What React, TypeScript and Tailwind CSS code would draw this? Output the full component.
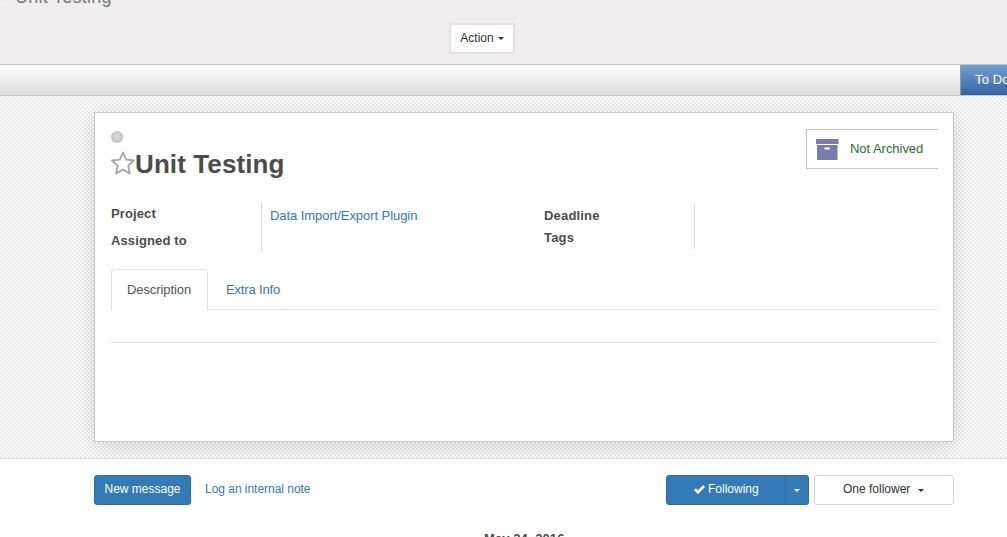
import React from "react";

function Caret({ className = "" }: { className?: string }) {
  return (
    <svg className={className} width="6" height="3" viewBox="0 0 6 3" fill="currentColor" aria-hidden="true">
      <path d="M0 0h6L3 3z" />
    </svg>
  );
}

function StarIcon() {
  return (
    <svg width="24" height="24" viewBox="0 0 24 24" fill="none" stroke="#a8a8a8" strokeWidth="1.9" strokeLinejoin="round" aria-hidden="true">
      <path d="M12 1.6l3.2 7 7.7.9-5.6 5.2 1.5 7.7-6.8-3.8-6.8 3.8 1.5-7.7L1.1 9.5l7.7-.9z" />
    </svg>
  );
}

function ArchiveIcon() {
  return (
    <svg width="23" height="21" viewBox="0 0 23 21" fill="#7c7bad" aria-hidden="true">
      <path d="M0.5 0h21.5q.5 0 .5.5v4.5H0V.5q0-.5.5-.5z" />
      <path fillRule="evenodd" d="M1 6h20.5v14.3q0 .7-.7.7H1.7q-.7 0-.7-.7zM9.2 8.6a.9.9 0 0 0 0 2h3.8a.9.9 0 0 0 0-2z" />
    </svg>
  );
}

function CheckIcon() {
  return (
    <svg width="11" height="9" viewBox="0 0 11 9" fill="none" stroke="currentColor" strokeWidth="2.7" aria-hidden="true">
      <path d="M.9 4.2l3.1 3L10.1 1" />
    </svg>
  );
}

export default function App() {
  return (
    <div className="flex h-[537px] w-[1007px] flex-col overflow-hidden bg-white font-['Liberation_Sans',Arial,sans-serif] text-[13px] leading-[18px] text-[#4c4c4c]">
      <header className="flex h-[65px] shrink-0 flex-col border-b border-[#c5c5cd] bg-[#f0eeee]">
        <div className="-mt-[15px] flex h-[24px] items-center gap-[12px] whitespace-nowrap text-[18px] leading-[24px] text-[#777]">
          <span className="-ml-[2px] w-[5px] text-[#aaa]">/</span>
          <span className="tracking-[0.25px]">Unit Testing</span>
        </div>
        <button className="ml-[449px] mt-[14px] flex h-[31px] w-[66px] items-center rounded-[3px] border-2 border-[#e3e2e2] bg-white pb-[2px] pl-[9px] text-[12px] text-[#333]">
          <span className="w-[34px] whitespace-nowrap">Action</span>
          <Caret className="ml-[4px] mt-[2px]" />
        </button>
      </header>

      <div className="flex h-[31px] shrink-0 justify-end border-b border-[#cacaca] bg-gradient-to-b from-[#fcfcfc] to-[#dedede]">
        <div className="h-[30px] w-[47px] overflow-hidden whitespace-nowrap border-l border-[#8b9bb5] bg-gradient-to-b from-[#729fcf] to-[#3465a4] pl-[14px] leading-[30px] tracking-[0.15px] text-white [text-shadow:0_1px_1px_rgba(43,43,43,.5),0_0_3px_rgba(255,255,255,.5)]">
          To Do
        </div>
      </div>

      <main className="flex h-[363px] shrink-0 overflow-hidden border-b border-[#ddd] bg-[conic-gradient(#fff_25%,#ebebeb_0_50%,#fff_0_75%,#ebebeb_0)] bg-[length:4px_4px] pl-[94px] pt-[16px]">
        <section className="h-[330px] w-[860px] border border-[#c8c8d3] bg-white pl-[16px] shadow-[0_4px_20px_rgba(0,0,0,.15)]">
          <div className="flex h-[89px] justify-between pt-[16px]">
            <div>
              <div className="mt-[2px] size-[12px] rounded-full bg-[radial-gradient(circle,#dedede_5%,#c1c1c1_70%)]" />
              <div className="mt-[5px] flex h-[32px] items-center">
                <div className="-mt-[3px]"><StarIcon /></div>
                <h1 className="whitespace-nowrap text-[26px] font-bold leading-[32px] tracking-[0.1px]">Unit Testing</h1>
              </div>
            </div>
            <div className="mr-[15px] flex h-[40px] w-[132px] items-center border border-r-0 border-[#c8c8c8] pl-[9px] text-[#2b6e38]">
              <ArchiveIcon />
              <span className="ml-[11px] whitespace-nowrap tracking-[-0.04px]">Not Archived</span>
            </div>
          </div>

          <div className="flex h-[68px] font-bold">
            <div className="flex h-[50px] w-[151px] flex-col gap-[9px] border-r border-[#ddd] pt-[3px] tracking-[0.12px]">
              <span>Project</span>
              <span>Assigned to</span>
            </div>
            <a className="w-[282px] pl-[8px] pt-[5px] font-normal tracking-[-0.06px] text-[#337ab7]">Data Import/Export Plugin</a>
            <div className="mt-[2px] flex h-[45px] w-[151px] flex-col gap-[4px] border-r border-[#ddd] pt-[3px] tracking-[0.18px]">
              <span>Deadline</span>
              <span>Tags</span>
            </div>
          </div>

          <nav className="flex h-[40px] w-[826px] border-b border-[#e2e2e2]">
            <div className="-mt-px h-[41px] w-[97px] shrink-0 rounded-t-[4px] border border-b-0 border-[#e0e0e0] bg-white pl-[15px] pt-[11px] tracking-[-0.09px] text-[#555]">Description</div>
            <a className="pl-[18px] pt-[11px] tracking-[-0.15px] text-[#337ab7]">Extra Info</a>
          </nav>
          <div className="h-[33px] w-[826px] border-b border-[#e2e2e2]" />
        </section>
      </main>

      <footer className="h-[78px] bg-white text-[12px]">
        <div className="flex h-[61px] pl-[94px] pt-[16px]">
          <button className="h-[30px] w-[97px] whitespace-nowrap rounded-[3px] border border-[#2e6da4] bg-[#337ab7] pb-[2px] text-white">New message</button>
          <a className="ml-[14px] w-[461px] pt-[5px] tracking-[-0.03px] text-[#337ab7]">Log an internal note</a>
          <div className="flex h-[30px] w-[143px] overflow-hidden rounded-[3px] border border-[#2e6da4] bg-[#337ab7] text-white">
            <button className="flex w-[119px] items-center gap-[3px] border-r border-[#2e6da4] pb-[2px] pl-[27px]">
              <CheckIcon />
              <span>Following</span>
            </button>
            <button className="flex flex-1 items-center justify-center"><Caret className="mt-px" /></button>
          </div>
          <button className="ml-[5px] flex h-[30px] w-[140px] items-center rounded-[3px] border border-[#d4d4d4] bg-white pb-[2px] pl-[28px] text-[#333]">
            <span className="whitespace-nowrap">One follower</span>
            <Caret className="ml-[8px] mt-[3px]" />
          </button>
        </div>
        <div className="ml-[484px] mt-[10px] whitespace-nowrap text-[13px] font-bold tracking-[0.08px]">May 24, 2016</div>
      </footer>
    </div>
  );
}
